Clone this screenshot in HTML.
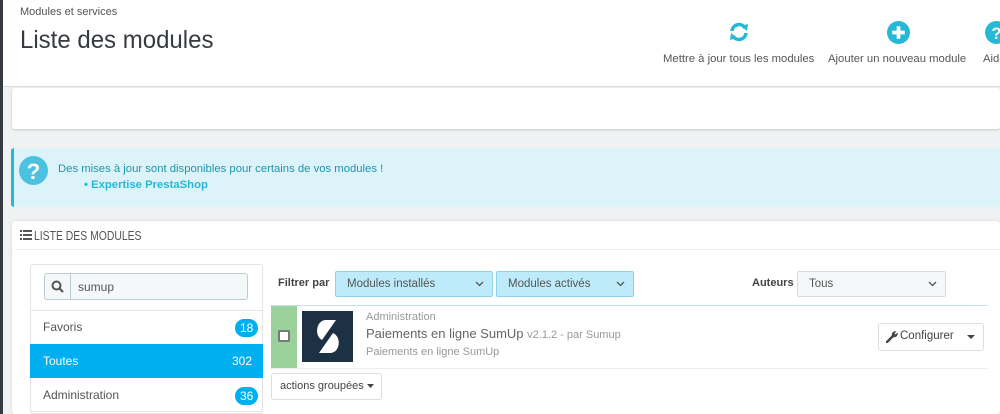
<!DOCTYPE html>
<html><head><meta charset="utf-8"><style>
*{box-sizing:border-box;margin:0;padding:0}
body{width:1000px;height:414px;overflow:hidden;background:#eff1f2;font-family:"Liberation Sans",sans-serif;color:#555;position:relative;font-size:12px}
.a{position:absolute;white-space:nowrap}
.strip{left:0;top:0;width:3px;height:414px;background:#363a41}
.hdr{left:3px;top:0;width:997px;height:87px;background:#fff;border-bottom:1px solid #dcdcdc}
.sel{border:1px solid #8fd3e9;background:#bdebfa;border-radius:2px;height:26px;font-size:11.5px;color:#555;padding:6px 11px}
.sel svg,.tsel svg{position:absolute;right:8px;top:9px}
.badge{background:#00aff0;color:#fff;border-radius:10px;padding:2px 5px;font-size:12px}
</style></head><body>
<div class="a strip"></div>
<div class="a hdr"></div>
<div class="a" style="left:20px;top:6px;font-size:11px;color:#555">Modules et services</div>
<div class="a" style="left:20px;top:26px;font-size:25px;color:#363a41;transform:scaleX(.96);transform-origin:left">Liste des modules</div>
<svg class="a" style="left:728px;top:21px" width="22" height="22" viewBox="0 0 22 22"><path d="M4 10 A7 7 0 0 1 17 7" fill="none" stroke="#25b9d7" stroke-width="3.5"/><path d="M13 5 L20 3 L19 10 Z" fill="#25b9d7"/><path d="M18 12 A7 7 0 0 1 5 15" fill="none" stroke="#25b9d7" stroke-width="3.5"/><path d="M9 17 L2 19 L3 12 Z" fill="#25b9d7"/></svg>
<div class="a" style="left:663px;top:53px;font-size:11.3px">Mettre à jour tous les modules</div>
<svg class="a" style="left:887px;top:21px" width="23" height="23" viewBox="0 0 22 22"><circle cx="11" cy="11" r="11" fill="#25b9d7"/><path d="M11 5v12M5 11h12" stroke="#fff" stroke-width="3.5"/></svg>
<div class="a" style="left:828px;top:53px;font-size:11.3px">Ajouter un nouveau module</div>
<svg class="a" style="left:985px;top:21px" width="23" height="23" viewBox="0 0 22 22"><circle cx="11" cy="11" r="11" fill="#25b9d7"/><text x="11" y="17" text-anchor="middle" font-size="16" font-weight="bold" fill="#fff" font-family="Liberation Sans">?</text></svg>
<div class="a" style="left:983px;top:53px;font-size:11.3px">Aide</div>
<div class="a" style="left:12px;top:88px;width:988px;height:41px;background:#fff;box-shadow:0 1px 2px #c8c8c8;border-radius:3px"></div>
<div class="a" style="left:11px;top:148px;width:989px;height:59px;background:#dcf3f9;border-left:3px solid #25b9d7;border-radius:3px"></div>
<svg class="a" style="left:19px;top:156px" width="29" height="29" viewBox="0 0 22 22"><circle cx="11" cy="11" r="11" fill="#4bc3e0"/><text x="11" y="17.5" text-anchor="middle" font-size="17" font-weight="bold" fill="#fff" font-family="Liberation Sans">?</text></svg>
<div class="a" style="left:58px;top:163px;font-size:11.3px;color:#1e94ab">Des mises à jour sont disponibles pour certains de vos modules !</div>
<div class="a" style="left:84px;top:179px;font-size:11.3px;color:#25b9d7;font-weight:bold">• Expertise PrestaShop</div>
<div class="a" style="left:12px;top:221px;width:988px;height:193px;background:#fff;border-radius:3px;box-shadow:0 0 2px #d0d0d0"></div>
<div class="a" style="left:15px;top:249px;width:985px;height:1px;background:#eee"></div>
<svg class="a" style="left:20px;top:230px" width="12" height="10" viewBox="0 0 12 10"><path d="M0 0h2v2H0zM0 4h2v2H0zM0 8h2v2H0zM3 0h9v2H3zM3 4h9v2H3zM3 8h9v2H3z" fill="#555"/></svg>
<div class="a" style="left:34px;top:228px;font-size:13px;color:#555;transform:scaleX(.8);transform-origin:left">LISTE DES MODULES</div>
<div class="a" style="left:30px;top:264px;width:233px;height:150px;border:1px solid #e5e5e5;border-radius:3px;background:#fff"></div>
<div class="a" style="left:44px;top:273px;width:204px;height:27px;border:1px solid #bbcdd2;background:#f5f8f9;border-radius:3px"></div>
<div class="a" style="left:70px;top:273px;width:1px;height:27px;background:#bbcdd2"></div>
<svg class="a" style="left:51px;top:280px" width="13" height="13" viewBox="0 0 13 13"><circle cx="5.5" cy="5.5" r="4" fill="none" stroke="#555" stroke-width="2"/><path d="M8.5 8.5L12 12" stroke="#555" stroke-width="2.2"/></svg>
<div class="a" style="left:78px;top:280px;font-size:12px;color:#555">sumup</div>
<div class="a" style="left:31px;top:310px;width:231px;height:1px;background:#e5e5e5"></div>
<div class="a" style="left:43px;top:320px;font-size:12px">Favoris</div>
<div class="a badge" style="left:235px;top:319px">18</div>
<div class="a" style="left:30px;top:344px;width:233px;height:34px;background:#00aff0"></div>
<div class="a" style="left:43px;top:354px;font-size:12px;color:#fff">Toutes</div>
<div class="a" style="left:232px;top:354px;font-size:12px;color:#fff">302</div>
<div class="a" style="left:43px;top:388px;font-size:12px">Administration</div>
<div class="a badge" style="left:235px;top:387px">36</div>
<div class="a" style="left:31px;top:411px;width:231px;height:1px;background:#e5e5e5"></div>
<div class="a" style="left:278px;top:277px;font-size:11px;font-weight:bold;color:#444">Filtrer par</div>
<div class="a sel" style="left:335px;top:271px;width:158px">Modules installés<svg width="9" height="6"><path d="M1 1l3.5 3.5L8 1" fill="none" stroke="#555" stroke-width="1.3"/></svg></div>
<div class="a sel" style="left:496px;top:271px;width:138px">Modules activés<svg width="9" height="6"><path d="M1 1l3.5 3.5L8 1" fill="none" stroke="#555" stroke-width="1.3"/></svg></div>
<div class="a" style="left:752px;top:277px;font-size:11px;font-weight:bold;color:#444">Auteurs</div>
<div class="a sel tsel" style="left:797px;top:271px;width:149px;background:#f5f8f9;border-color:#d5dde0">Tous<svg width="9" height="6"><path d="M1 1l3.5 3.5L8 1" fill="none" stroke="#555" stroke-width="1.3"/></svg></div>
<div class="a" style="left:270px;top:305px;width:718px;height:1px;background:#bfe3ef"></div>
<div class="a" style="left:271px;top:306px;width:26px;height:62px;background:#9bd29b"></div>
<div class="a" style="left:278px;top:330px;width:12px;height:12px;border:2px solid #777;background:#fff;border-radius:2px"></div>
<svg class="a" style="left:302px;top:311px" width="51" height="51" viewBox="0 0 51 51"><rect width="51" height="51" fill="#1c3144"/><path d="M34 9 H24 C14 9 12 25 20 29 Z" fill="#fff"/><path d="M31 22 C40 26 38 42 28 42 H17 Z" fill="#fff"/></svg>
<div class="a" style="left:366px;top:311px;font-size:11px;color:#999">Administration</div>
<div class="a" style="left:366px;top:326px;font-size:13px;color:#666">Paiements en ligne SumUp <span style="font-size:11px;color:#999">v2.1.2 - par Sumup</span></div>
<div class="a" style="left:366px;top:346px;font-size:11px;color:#999">Paiements en ligne SumUp</div>
<div class="a" style="left:878px;top:323px;width:106px;height:28px;border:1px solid #ddd;border-radius:3px;background:#fff"></div>
<svg class="a" style="left:886px;top:331px" width="12" height="12" viewBox="0 0 12 12"><path d="M1 11 L7 5" stroke="#444" stroke-width="2.4" stroke-linecap="round"/><path d="M6 5 A3.5 3.5 0 0 1 10.5 0.5 L8.5 2.5 L9.5 3.5 L11.5 1.5 A3.5 3.5 0 0 1 7 6 Z" fill="#444"/></svg>
<div class="a" style="left:900px;top:330px;font-size:11.5px;color:#444">Configurer</div>
<svg class="a" style="left:967px;top:335px" width="8" height="5"><path d="M0 0h8L4 4z" fill="#444"/></svg>
<div class="a" style="left:270px;top:368px;width:718px;height:1px;background:#eee"></div>
<div class="a" style="left:271px;top:373px;width:111px;height:27px;border:1px solid #ddd;border-radius:3px;background:#fff;font-size:11px;color:#444;padding:6px 8px">actions groupées <svg width="8" height="5"><path d="M0 0h7L3.5 4z" fill="#444"/></svg></div>
</body></html>
